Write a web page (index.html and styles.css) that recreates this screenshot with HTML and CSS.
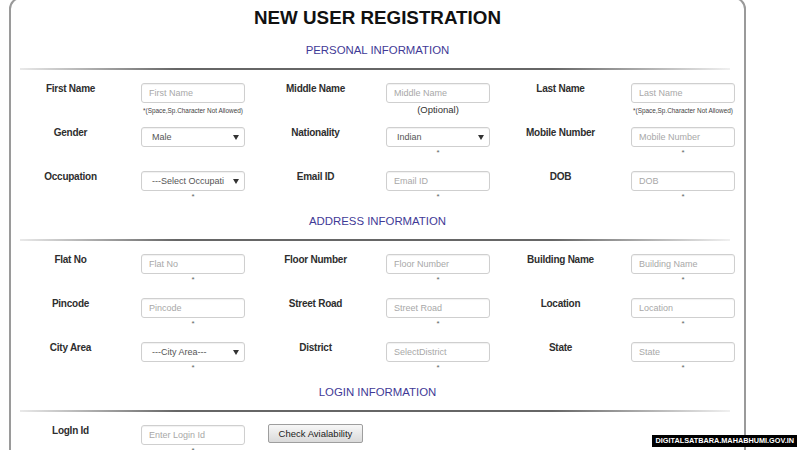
FILE: index.html
```html
<!DOCTYPE html>
<html lang="en">
<head>
<meta charset="utf-8">
<title>New User Registration</title>
<link rel="stylesheet" href="styles.css">
</head>
<body>
<div class="panel">
  <h1 class="title">NEW USER REGISTRATION</h1>

  <section class="section">
    <h2 class="section-title">PERSONAL INFORMATION</h2>
    <div class="divider"></div>
    <div class="row">
      <div class="label">First Name</div>
      <div class="field"><input class="input" placeholder="First Name"><div class="note">*(Space,Sp.Character Not Allowed)</div></div>
      <div class="label">Middle Name</div>
      <div class="field"><input class="input" placeholder="Middle Name"><div class="optional">(Optional)</div></div>
      <div class="label">Last Name</div>
      <div class="field"><input class="input" placeholder="Last Name"><div class="note">*(Space,Sp.Character Not Allowed)</div></div>
    </div>
    <div class="row">
      <div class="label">Gender</div>
      <div class="field"><div class="select"><span class="val">Male</span><svg class="caret" width="6" height="5" viewBox="0 0 6 5"><path d="M0 0h6L3 5z"/></svg></div></div>
      <div class="label">Nationality</div>
      <div class="field"><div class="select"><span class="val">Indian</span><svg class="caret" width="6" height="5" viewBox="0 0 6 5"><path d="M0 0h6L3 5z"/></svg></div><div class="req">*</div></div>
      <div class="label">Mobile Number</div>
      <div class="field"><input class="input" placeholder="Mobile Number"><div class="req">*</div></div>
    </div>
    <div class="row">
      <div class="label">Occupation</div>
      <div class="field"><div class="select"><span class="val">---Select Occupati</span><svg class="caret" width="6" height="5" viewBox="0 0 6 5"><path d="M0 0h6L3 5z"/></svg></div><div class="req">*</div></div>
      <div class="label">Email ID</div>
      <div class="field"><input class="input" placeholder="Email ID"><div class="req">*</div></div>
      <div class="label">DOB</div>
      <div class="field"><input class="input" placeholder="DOB"><div class="req">*</div></div>
    </div>
  </section>

  <section class="section">
    <h2 class="section-title">ADDRESS INFORMATION</h2>
    <div class="divider"></div>
    <div class="row">
      <div class="label">Flat No</div>
      <div class="field"><input class="input" placeholder="Flat No"><div class="req">*</div></div>
      <div class="label">Floor Number</div>
      <div class="field"><input class="input" placeholder="Floor Number"><div class="req">*</div></div>
      <div class="label">Building Name</div>
      <div class="field"><input class="input" placeholder="Building Name"><div class="req">*</div></div>
    </div>
    <div class="row">
      <div class="label">Pincode</div>
      <div class="field"><input class="input" placeholder="Pincode"><div class="req">*</div></div>
      <div class="label">Street Road</div>
      <div class="field"><input class="input" placeholder="Street Road"><div class="req">*</div></div>
      <div class="label">Location</div>
      <div class="field"><input class="input" placeholder="Location"><div class="req">*</div></div>
    </div>
    <div class="row">
      <div class="label">City Area</div>
      <div class="field"><div class="select"><span class="val">---City Area---</span><svg class="caret" width="6" height="5" viewBox="0 0 6 5"><path d="M0 0h6L3 5z"/></svg></div><div class="req">*</div></div>
      <div class="label">District</div>
      <div class="field"><input class="input" placeholder="SelectDistrict"><div class="req">*</div></div>
      <div class="label">State</div>
      <div class="field"><input class="input" placeholder="State"><div class="req">*</div></div>
    </div>
  </section>

  <section class="section">
    <h2 class="section-title">LOGIN INFORMATION</h2>
    <div class="divider"></div>
    <div class="row">
      <div class="label">LogIn Id</div>
      <div class="field"><input class="input" placeholder="Enter Login Id"><div class="req">*</div></div>
      <div class="label"><button class="btn" type="button">Check Avialability</button></div>
    </div>
  </section>
</div>
<div class="watermark">DIGITALSATBARA.MAHABHUMI.GOV.IN</div>
</body>
</html>
```

FILE: styles.css
```css
html, body {
  margin: 0;
  padding: 0;
  background: #fff;
  overflow: hidden;
}

body {
  font-family: "Liberation Sans", Arial, sans-serif;
  color: #333;
}

.panel {
  box-sizing: border-box;
  width: 737px;
  margin: -3px 0 0 9px;
  border: 2px solid #9a9a9a;
  border-radius: 12px;
  padding-bottom: 60px;
}

.title {
  margin: 8px 0 15px;
  font-size: 18.8px;
  line-height: 22px;
  font-weight: bold;
  color: #111;
  text-align: center;
}

.section-title {
  margin: -1px 0 0;
  font-size: 11.4px;
  line-height: 14px;
  font-weight: normal;
  color: #3f3a96;
  text-align: center;
}

.divider {
  height: 2px;
  margin: 11px 14px 13px 9px;
  background: linear-gradient(to right, rgba(110,110,110,0.15), #666 22%, #666 75%, rgba(110,110,110,0.1));
}

.row {
  display: grid;
  grid-template-columns: 101px 104px 101px 104px 101px 104px;
  column-gap: 20px;
  height: 44px;
  padding-left: 9px;
  align-items: start;
}

.label {
  font-size: 10px;
  line-height: 12px;
  font-weight: bold;
  letter-spacing: -0.25px;
  color: #2e2e2e;
  text-align: center;
  white-space: nowrap;
}

.field {
  display: flex;
  flex-direction: column;
  align-items: center;
}

.input {
  box-sizing: border-box;
  width: 104px;
  height: 20px;
  margin: 0;
  padding: 0 7px;
  border: 1px solid #cfcfcf;
  border-radius: 3px;
  box-shadow: inset 0 1px 1px rgba(0,0,0,0.06);
  font-family: "Liberation Sans", Arial, sans-serif;
  font-size: 9px;
  color: #555;
  background: #fff;
  outline: none;
}

.input::placeholder {
  color: #a8a8a8;
}

.select {
  box-sizing: border-box;
  width: 104px;
  height: 20px;
  display: flex;
  align-items: center;
  justify-content: space-between;
  padding: 0 5px 0 10px;
  border: 1px solid #cfcfcf;
  border-radius: 3px;
  box-shadow: inset 0 1px 1px rgba(0,0,0,0.06);
  background: #fff;
  font-size: 9px;
  color: #555;
}

.val {
  white-space: nowrap;
}

.caret {
  fill: #333;
  flex: none;
}

.req {
  margin-top: 2px;
  font-size: 8px;
  line-height: 8px;
  color: #666;
}

.note {
  margin-top: 4px;
  font-size: 6.4px;
  line-height: 8px;
  color: #444;
  white-space: nowrap;
}

.optional {
  margin-top: 1px;
  font-size: 9.5px;
  line-height: 11px;
  color: #333;
}

.btn {
  box-sizing: border-box;
  width: 95px;
  height: 19px;
  margin-top: -1px;
  padding: 0;
  border: 1px solid #9e9e9e;
  border-radius: 2px;
  background: linear-gradient(#f7f7f7, #dadada);
  font-family: "Liberation Sans", Arial, sans-serif;
  font-size: 9.5px;
  letter-spacing: 0;
  font-weight: normal;
  color: #222;
}

.watermark {
  position: fixed;
  right: 3px;
  bottom: 3px;
  padding: 0 3px;
  background: #000;
  color: #fff;
  font-size: 7.3px;
  line-height: 12px;
  font-weight: bold;
  white-space: nowrap;
}
```
